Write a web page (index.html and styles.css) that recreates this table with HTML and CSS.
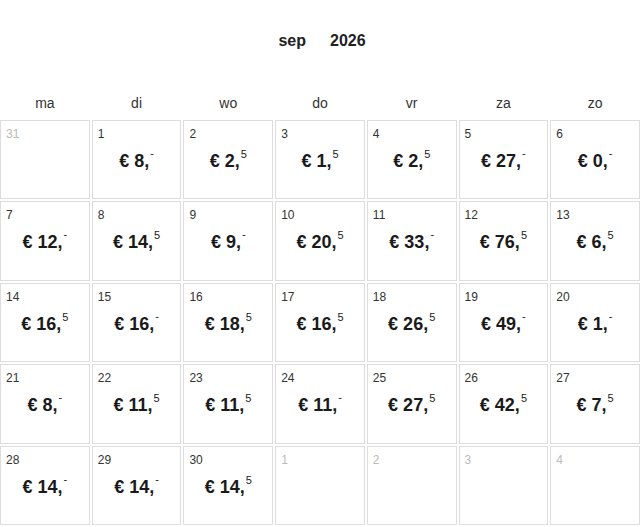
FILE: index.html
```html
<!DOCTYPE html>
<html>
<head>
<meta charset="utf-8">
<link rel="stylesheet" href="styles.css">
</head>
<body>
<div class="cal">
  <div class="title"><span>sep</span><span>2026</span></div>
  <div class="weekdays">
    <div>ma</div><div>di</div><div>wo</div><div>do</div><div>vr</div><div>za</div><div>zo</div>
  </div>
  <div class="grid">
    <div class="cell other"><div class="num">31</div></div>
    <div class="cell"><div class="num">1</div><div class="price">€ 8,<sup class="dash">-</sup></div></div>
    <div class="cell"><div class="num">2</div><div class="price">€ 2,<sup>5</sup></div></div>
    <div class="cell"><div class="num">3</div><div class="price">€ 1,<sup>5</sup></div></div>
    <div class="cell"><div class="num">4</div><div class="price">€ 2,<sup>5</sup></div></div>
    <div class="cell"><div class="num">5</div><div class="price">€ 27,<sup class="dash">-</sup></div></div>
    <div class="cell"><div class="num">6</div><div class="price">€ 0,<sup class="dash">-</sup></div></div>

    <div class="cell"><div class="num">7</div><div class="price">€ 12,<sup class="dash">-</sup></div></div>
    <div class="cell"><div class="num">8</div><div class="price">€ 14,<sup>5</sup></div></div>
    <div class="cell"><div class="num">9</div><div class="price">€ 9,<sup class="dash">-</sup></div></div>
    <div class="cell"><div class="num">10</div><div class="price">€ 20,<sup>5</sup></div></div>
    <div class="cell"><div class="num">11</div><div class="price">€ 33,<sup class="dash">-</sup></div></div>
    <div class="cell"><div class="num">12</div><div class="price">€ 76,<sup>5</sup></div></div>
    <div class="cell"><div class="num">13</div><div class="price">€ 6,<sup>5</sup></div></div>

    <div class="cell"><div class="num">14</div><div class="price">€ 16,<sup>5</sup></div></div>
    <div class="cell"><div class="num">15</div><div class="price">€ 16,<sup class="dash">-</sup></div></div>
    <div class="cell"><div class="num">16</div><div class="price">€ 18,<sup>5</sup></div></div>
    <div class="cell"><div class="num">17</div><div class="price">€ 16,<sup>5</sup></div></div>
    <div class="cell"><div class="num">18</div><div class="price">€ 26,<sup>5</sup></div></div>
    <div class="cell"><div class="num">19</div><div class="price">€ 49,<sup class="dash">-</sup></div></div>
    <div class="cell"><div class="num">20</div><div class="price">€ 1,<sup class="dash">-</sup></div></div>

    <div class="cell"><div class="num">21</div><div class="price">€ 8,<sup class="dash">-</sup></div></div>
    <div class="cell"><div class="num">22</div><div class="price">€ 11,<sup>5</sup></div></div>
    <div class="cell"><div class="num">23</div><div class="price">€ 11,<sup>5</sup></div></div>
    <div class="cell"><div class="num">24</div><div class="price">€ 11,<sup class="dash">-</sup></div></div>
    <div class="cell"><div class="num">25</div><div class="price">€ 27,<sup>5</sup></div></div>
    <div class="cell"><div class="num">26</div><div class="price">€ 42,<sup>5</sup></div></div>
    <div class="cell"><div class="num">27</div><div class="price">€ 7,<sup>5</sup></div></div>

    <div class="cell"><div class="num">28</div><div class="price">€ 14,<sup class="dash">-</sup></div></div>
    <div class="cell"><div class="num">29</div><div class="price">€ 14,<sup class="dash">-</sup></div></div>
    <div class="cell"><div class="num">30</div><div class="price">€ 14,<sup>5</sup></div></div>
    <div class="cell other"><div class="num">1</div></div>
    <div class="cell other"><div class="num">2</div></div>
    <div class="cell other"><div class="num">3</div></div>
    <div class="cell other"><div class="num">4</div></div>
  </div>
</div>
</body>
</html>
```

FILE: styles.css
```css
html, body {
  margin: 0;
  padding: 0;
  background: #fff;
}
body {
  font-family: "Liberation Sans", Arial, sans-serif;
  color: #222;
}
.cal {
  width: 640px;
}
.title {
  display: flex;
  justify-content: center;
  gap: 24px;
  padding-top: 31px;
  padding-left: 4px;
  height: 20px;
  font-size: 16px;
  font-weight: bold;
  line-height: 20px;
  color: #222;
}
.weekdays {
  display: grid;
  grid-template-columns: repeat(7, 1fr);
  gap: 2px;
  margin-top: 42px;
  height: 27px;
  font-size: 14px;
  line-height: 20px;
  text-align: center;
  color: #333;
}
.grid {
  display: grid;
  grid-template-columns: repeat(7, 1fr);
  grid-auto-rows: 79.4px;
  gap: 2px;
}
.cell {
  border: 1px solid #ddd;
  padding: 6px 5px 5px;
  display: flex;
  flex-direction: column;
}
.num {
  font-size: 12px;
  line-height: 14px;
  color: #333;
}
.other .num {
  color: #bbb;
}
.price {
  margin-top: 9px;
  text-align: center;
  font-size: 18px;
  font-weight: bold;
  line-height: 22px;
  color: #1a1a1a;
}
.price sup {
  font-size: 11px;
  line-height: 11px;
  font-weight: normal;
  vertical-align: top;
  position: relative;
  top: -1px;
  margin-left: 1px;
}
.price sup.dash {
  top: -2px;
}
```
